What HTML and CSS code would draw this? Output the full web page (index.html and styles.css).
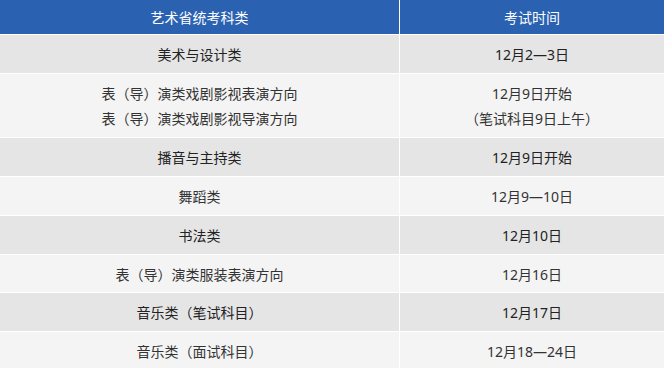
FILE: index.html
```html
<!DOCTYPE html>
<html lang="zh-CN">
<head>
<meta charset="utf-8">
<title>艺术省统考时间</title>
<link rel="stylesheet" href="styles.css">
</head>
<body>
<table class="schedule">
  <thead>
    <tr class="head">
      <th class="c1">艺术省统考科类</th>
      <th class="c2">考试时间</th>
    </tr>
  </thead>
  <tbody>
    <tr class="dark"><td>美术与设计类</td><td>12月2—3日</td></tr>
    <tr class="light tall"><td>表（导）演类戏剧影视表演方向<br>表（导）演类戏剧影视导演方向</td><td>12月9日开始<br>（笔试科目9日上午）</td></tr>
    <tr class="dark"><td>播音与主持类</td><td>12月9日开始</td></tr>
    <tr class="light"><td>舞蹈类</td><td>12月9—10日</td></tr>
    <tr class="dark"><td>书法类</td><td>12月10日</td></tr>
    <tr class="light short"><td>表（导）演类服装表演方向</td><td>12月16日</td></tr>
    <tr class="dark"><td>音乐类（笔试科目）</td><td>12月17日</td></tr>
    <tr class="light"><td>音乐类（面试科目）</td><td>12月18—24日</td></tr>
  </tbody>
</table>
</body>
</html>
```

FILE: styles.css
```css
html, body {
  margin: 0;
  padding: 0;
  background: #ffffff;
}

.schedule {
  width: 664px;
  border-collapse: collapse;
  table-layout: fixed;
  font-family: "Noto Sans", "Noto Sans CJK SC", "Microsoft YaHei", sans-serif;
  font-size: 14px;
  color: #333333;
}

.schedule th,
.schedule td {
  border: 1px solid #ffffff;
  text-align: center;
  vertical-align: middle;
  padding: 0;
  font-weight: normal;
}

.schedule tr:first-child th { border-top: 0; }
.schedule th:first-child,
.schedule td:first-child { border-left: 0; }
.schedule th:last-child,
.schedule td:last-child { border-right: 0; }

.c1 { width: 399px; }

.head th {
  height: 34px;
  background: #2a62b1;
  color: #ffffff;
}

.dark td {
  height: 38px;
  background: #e5e5e5;
  color: #222222;
}

.light td {
  height: 38px;
  background: #f4f4f4;
  color: #333333;
}

.light.short td { height: 37px; }

.tall td {
  height: 63px;
  line-height: 25px;
}
```
